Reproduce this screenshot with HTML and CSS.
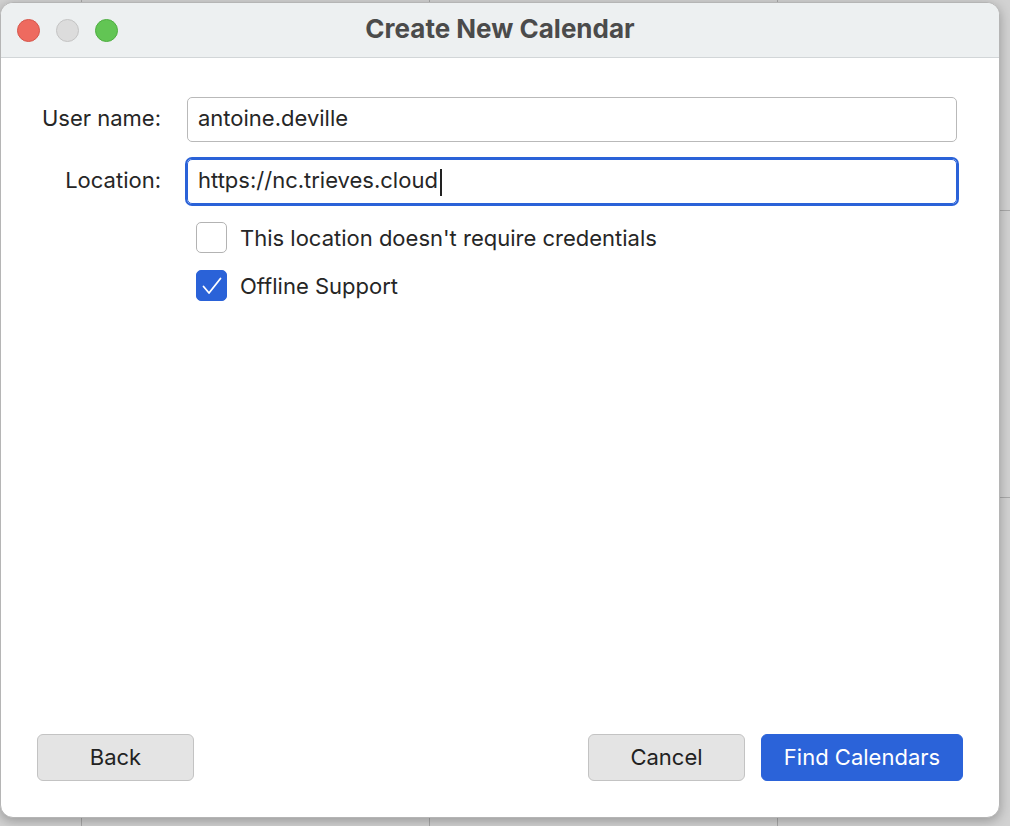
FILE: index.html
```html
<!DOCTYPE html>
<html lang="en">
<head>
    <meta charset="UTF-8">
    <title>Create New Calendar</title>
    <link rel="stylesheet" href="styles.css">
</head>
<body>
<div class="window">
    <div class="titlebar">
        <div class="lights">
            <span class="light close"></span>
            <span class="light mini"></span>
            <span class="light zoom"></span>
        </div>
        <h1 class="title">Create New Calendar</h1>
    </div>
    <div class="content">
        <div class="form">
            <label class="lbl">User name:</label>
            <div class="input">antoine.deville</div>
            <label class="lbl">Location:</label>
            <div class="input focus">https://nc.trieves.cloud<span class="caret"></span></div>
            <div></div>
            <div class="checks">
                <div class="check">
                    <span class="box"></span>
                    <span>This location doesn't require credentials</span>
                </div>
                <div class="check">
                    <span class="box on">
                        <svg width="26" height="26" viewBox="0 0 26 26"><path d="M4.5 13.5 L10 20 L21.5 5.5" fill="none" stroke="#fff" stroke-width="1.8" stroke-linecap="round" stroke-linejoin="round"/></svg>
                    </span>
                    <span>Offline Support</span>
                </div>
            </div>
        </div>
        <div class="buttons">
            <button class="btn">Back</button>
            <div class="right">
                <button class="btn">Cancel</button>
                <button class="btn primary">Find Calendars</button>
            </div>
        </div>
    </div>
</div>
</body>
</html>
```

FILE: styles.css
```css
/* desktop behind the sheet: calendar grid */
html,body{margin:0;height:100%;}
body{
    width:1010px;
    height:826px;
    overflow:hidden;
    background-color:#d2d2d2;
    background-image:
        linear-gradient(90deg, transparent 81px, #a9a9a9 81px, #a9a9a9 82px, transparent 82px),
        linear-gradient(90deg, transparent 429px, #a9a9a9 429px, #a9a9a9 430px, transparent 430px),
        linear-gradient(90deg, transparent 777px, #a9a9a9 777px, #a9a9a9 778px, transparent 778px),
        linear-gradient(180deg, transparent 210px, #a9a9a9 210px, #a9a9a9 211px, transparent 211px),
        linear-gradient(180deg, transparent 497px, #a9a9a9 497px, #a9a9a9 498px, transparent 498px);
    font-family:Inter,"Liberation Sans",sans-serif;
    color:#262626;
}

.window{
    margin:2px 0 0 0;
    width:1000px;
    height:816px;
    box-sizing:border-box;
    background:#fff;
    border-radius:13px;
    border:1px solid #b5b5b5;
    box-shadow:0 3px 12px rgba(0,0,0,.28);
    display:flex;
    flex-direction:column;
    overflow:hidden;
}

.titlebar{
    height:54px;
    flex:none;
    background:#edf0f1;
    border-bottom:1px solid #d2d6d8;
    display:flex;
    align-items:center;
    justify-content:center;
    position:relative;
}
.lights{position:absolute;left:16px;top:16px;display:flex;gap:16px;}
.light{width:23px;height:23px;border-radius:50%;box-sizing:border-box;}
.close{background:#ee6a5f;border:1px solid #d6564b;}
.mini{background:#dcdcdc;border:1px solid #c4c4c4;}
.zoom{background:#62c554;border:1px solid #4eae41;}
.title{margin:0 0 3px 0;font-size:26px;font-weight:700;color:#4b4b4b;}

.content{
    flex:1;
    display:flex;
    flex-direction:column;
    justify-content:space-between;
    padding:39px 36px 36px 36px;
}

.form{
    display:grid;
    grid-template-columns:124px 770px;
    column-gap:26px;
    row-gap:17px;
    align-items:center;
}
.lbl{text-align:right;font-size:22px;padding-bottom:3px;}
.input{
    height:45px;
    box-sizing:border-box;
    border:1px solid #b9b9b9;
    border-radius:5px;
    padding:0 10px 3px 10px;
    font-size:22px;
    display:flex;
    align-items:center;
}
.input.focus{border-color:#2a62d8;box-shadow:0 0 0 2px #2a62d8;}
.caret{display:inline-block;width:2px;height:27px;background:#222;margin:5px 0 0 2px;}

.checks{display:flex;flex-direction:column;gap:17px;margin-top:1px;padding-left:9px;}
.check{display:flex;align-items:center;gap:13px;font-size:22px;}
.box{
    width:31px;height:31px;
    box-sizing:border-box;
    border:1px solid #b3b3b3;
    border-radius:5px;
    display:flex;align-items:center;justify-content:center;
}
.box.on{background:#2a62d8;border-color:#2a62d8;}

.buttons{display:flex;justify-content:space-between;align-items:center;}
.right{display:flex;gap:16px;}
.btn{
    height:47px;
    min-width:157px;
    box-sizing:border-box;
    padding:0 20px 2px 20px;
    border:1px solid #c3c3c3;
    border-radius:6px;
    background:#e4e4e4;
    font-family:Inter,"Liberation Sans",sans-serif;
    font-size:22px;
    color:#222;
}
.btn.primary{background:#2b63d9;border-color:#2b63d9;color:#fff;min-width:202px;}
```
